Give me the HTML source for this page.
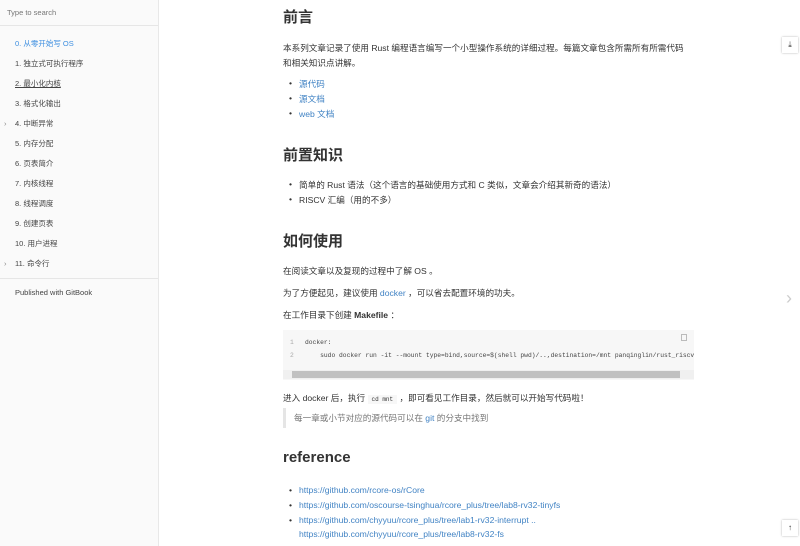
<!DOCTYPE html>
<html><head><meta charset="utf-8"><style>
*{margin:0;padding:0;box-sizing:border-box}
body{width:800px;height:546px;overflow:hidden;background:#fff;font-family:"Liberation Sans","Noto Sans CJK SC",sans-serif;color:#333;position:relative}
.side{position:absolute;left:0;top:0;width:159px;height:546px;background:#fafafa;border-right:1px solid #e8e8e8}
.search{height:26px;border-bottom:1px solid #e6e6e6;font-size:7.5px;color:#777;padding:8px 0 0 7px}
.side ul{list-style:none;margin-top:8px}
.side li{font-size:7.5px;color:#444;height:20px;line-height:20px;padding-left:15px;position:relative}
.side li.a{color:#3e8fe0}
.side li.u span{text-decoration:underline}
.side li.c:before{content:"›";position:absolute;left:4px;color:#888}
.side .hr{border-top:1px solid #e6e6e6;margin-top:4px}
.side .pub{font-size:7.5px;color:#444;padding:9px 0 0 15px}
.t{position:absolute;left:283px;font-size:8.6px;color:#333;white-space:nowrap}
h2{position:absolute;left:283px;font-size:15px;font-weight:bold;color:#333}
a{color:#4183c4;text-decoration:none}
.li{position:absolute;left:299px;font-size:8.6px;white-space:nowrap}
.li:before{content:"•";position:absolute;left:-10px;color:#333}
.code{position:absolute;left:283px;top:330px;width:411px;height:50px;background:#f7f7f7;font-family:"Liberation Mono",monospace;font-size:6.3px;color:#444;overflow:hidden}
.bq{position:absolute;left:283px;top:408px;border-left:3px solid #e5e5e5;height:20px;padding-left:8px;font-size:8.6px;color:#777;line-height:20px}
.btn{position:absolute;width:16px;height:16px;background:#fff;box-shadow:0 0 2px rgba(0,0,0,.3);font-size:8px;text-align:center;line-height:16px;color:#333}
</style></head><body>
<div class="side">
<div class="search">Type to search</div>
<ul>
<li class="a">0. 从零开始写 OS</li>
<li>1. 独立式可执行程序</li>
<li class="u"><span>2. 最小化内核</span></li>
<li>3. 格式化输出</li>
<li class="c">4. 中断异常</li>
<li>5. 内存分配</li>
<li>6. 页表简介</li>
<li>7. 内核线程</li>
<li>8. 线程调度</li>
<li>9. 创建页表</li>
<li>10. 用户进程</li>
<li class="c">11. 命令行</li>
</ul>
<div class="hr"></div>
<div class="pub">Published with GitBook</div>
</div>

<h2 style="top:6px">前言</h2>
<div class="t" style="top:42px">本系列文章记录了使用 Rust 编程语言编写一个小型操作系统的详细过程。每篇文章包含所需所有所需代码</div>
<div class="t" style="top:57px">和相关知识点讲解。</div>
<div class="li" style="top:78px"><a>源代码</a></div>
<div class="li" style="top:93px"><a>源文档</a></div>
<div class="li" style="top:108px"><a>web 文档</a></div>

<h2 style="top:144px">前置知识</h2>
<div class="li" style="top:179px;color:#333">简单的 Rust 语法（这个语言的基础使用方式和 C 类似，文章会介绍其新奇的语法）</div>
<div class="li" style="top:194px;color:#333">RISCV 汇编（用的不多）</div>

<h2 style="top:230px">如何使用</h2>
<div class="t" style="top:265px">在阅读文章以及复现的过程中了解 OS 。</div>
<div class="t" style="top:287px">为了方便起见，建议使用 <a>docker</a> ，可以省去配置环境的功夫。</div>
<div class="t" style="top:309px">在工作目录下创建 <b>Makefile</b> ：</div>
<div class="code">
<div style="position:absolute;left:7px;top:9px;color:#aaa">1</div>
<div style="position:absolute;left:7px;top:22px;color:#aaa">2</div>
<div style="position:absolute;left:22px;top:9px;white-space:nowrap">docker:</div>
<div style="position:absolute;left:22px;top:22px;white-space:pre">    sudo docker run -it --mount type=bind,source=$(shell pwd)/..,destination=/mnt panqinglin/rust_riscv</div>
<div style="position:absolute;right:7px;top:4px;width:6px;height:7px;border:1px solid #bbb"></div>
<div style="position:absolute;left:0;top:40px;width:411px;height:9px;background:#f0f0f0"></div>
<div style="position:absolute;left:9px;top:41px;width:388px;height:7px;background:#c1c1c1"></div>
</div>
<div class="t" style="top:392px">进入 docker 后，执行 <code style="font-family:'Liberation Mono',monospace;font-size:6px;background:#f7f7f7;padding:1px 4px">cd mnt</code> ，即可看见工作目录，然后就可以开始写代码啦！</div>
<div class="bq">每一章或小节对应的源代码可以在 <a>git</a> 的分支中找到</div>

<h2 style="top:449px">reference</h2>
<div class="li" style="top:485px"><a>https://github.com/rcore-os/rCore</a></div>
<div class="li" style="top:500px"><a>https://github.com/oscourse-tsinghua/rcore_plus/tree/lab8-rv32-tinyfs</a></div>
<div class="li" style="top:515px"><a>https://github.com/chyyuu/rcore_plus/tree/lab1-rv32-interrupt ..</a></div>
<div class="t" style="top:529px;left:299px"><a>https://github.com/chyyuu/rcore_plus/tree/lab8-rv32-fs</a></div>

<div class="btn" style="left:782px;top:37px">⤓</div>
<div style="position:absolute;left:786px;top:288px;font-size:18px;color:#ccc">›</div>
<div class="btn" style="left:782px;top:520px">↑</div>
</body></html>
